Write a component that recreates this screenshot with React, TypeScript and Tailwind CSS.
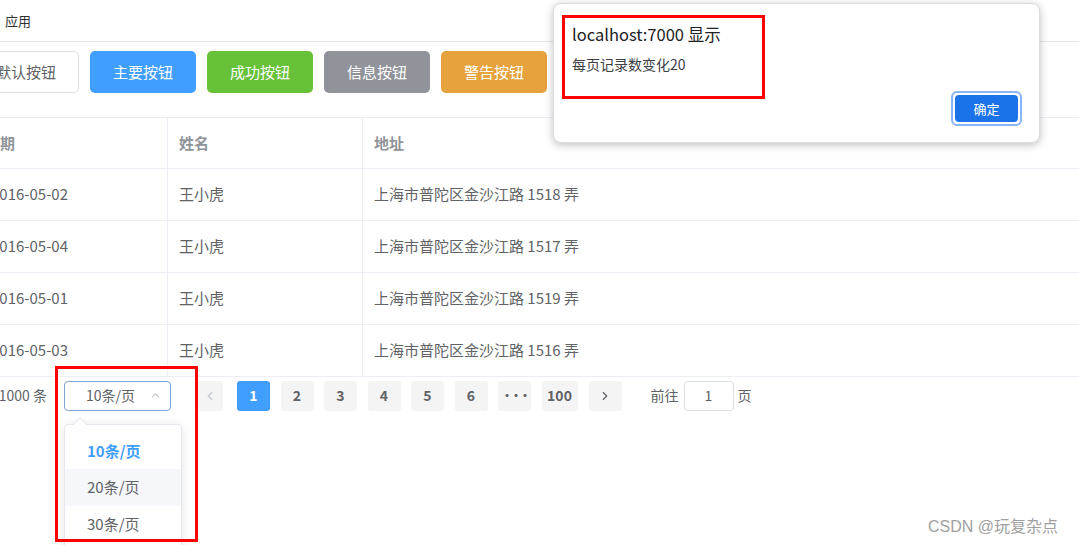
import { ChevronLeft, ChevronRight, ChevronUp } from "lucide-react";

const BUTTONS = [
  { label: "默认按钮", cls: "bg-white text-[#606266] border border-[#dcdfe6]" },
  { label: "主要按钮", cls: "bg-[#409eff] text-white" },
  { label: "成功按钮", cls: "bg-[#67c23a] text-white" },
  { label: "信息按钮", cls: "bg-[#909399] text-white" },
  { label: "警告按钮", cls: "bg-[#e6a23c] text-white" },
];

const ROWS = [
  { date: "2016-05-02", name: "王小虎", address: "上海市普陀区金沙江路 1518 弄" },
  { date: "2016-05-04", name: "王小虎", address: "上海市普陀区金沙江路 1517 弄" },
  { date: "2016-05-01", name: "王小虎", address: "上海市普陀区金沙江路 1519 弄" },
  { date: "2016-05-03", name: "王小虎", address: "上海市普陀区金沙江路 1516 弄" },
];

const PAGES = ["1", "2", "3", "4", "5", "6", "···", "100"];

export default function App() {
  return (
    <div className="relative w-[1079px] h-[545px] overflow-hidden bg-white font-['Noto_Sans_CJK_SC',sans-serif] text-[#606266]">
      {/* top menu */}
      <div className="h-[42px] flex items-center pl-[5px] border-b border-[#e6e6e6] text-[13px] text-[#303133]">
        应用
      </div>

      {/* buttons */}
      <div className="flex gap-[11px] ml-[-27px] pt-[9px]">
        {BUTTONS.map((b) => (
          <div
            key={b.label}
            className={`w-[106px] h-[42px] shrink-0 rounded-[5px] flex items-center justify-center text-[15px] ${b.cls}`}
          >
            {b.label}
          </div>
        ))}
      </div>

      {/* table */}
      <div className="mt-[24px] ml-[-20px] border-t border-[#ebeef5] text-[15px]">
        <div className="grid grid-cols-[188px_195px_1fr] h-[51px] border-b border-[#ebeef5] font-bold text-[#909399]">
          <div className="flex items-center pl-[5px] border-r border-[#ebeef5]">日期</div>
          <div className="flex items-center pl-[11px] border-r border-[#ebeef5]">姓名</div>
          <div className="flex items-center pl-[11px]">地址</div>
        </div>
        {ROWS.map((r) => (
          <div
            key={r.date}
            className="grid grid-cols-[188px_195px_1fr] h-[52px] border-b border-[#ebeef5]"
          >
            <div className="flex items-center pl-[11px] border-r border-[#ebeef5]">{r.date}</div>
            <div className="flex items-center pl-[11px] border-r border-[#ebeef5]">{r.name}</div>
            <div className="flex items-center pl-[11px]">{r.address}</div>
          </div>
        ))}
      </div>

      {/* pagination */}
      <div className="flex items-center h-[37px] ml-[-24px] text-[14px]">
        <span className="w-[71px] shrink-0 whitespace-nowrap text-right">共 1000 条</span>
        <div className="ml-[17px] w-[107px] h-[30px] shrink-0 rounded-[4px] border border-[#7aa3cf] flex items-center justify-between pl-[21px] pr-[8px] text-[14px]">
          <span>10条/页</span>
          <ChevronUp size={13} className="text-[#c0c4cc]" />
        </div>
        <div className="ml-[26px] w-[26px] h-[30px] rounded-[3px] bg-[#f4f4f5] flex items-center justify-center">
          <ChevronLeft size={14} className="text-[#c0c4cc]" />
        </div>
        <div className="flex gap-[10.5px] ml-[14px]">
          {PAGES.map((p, i) => (
            <div
              key={p}
              className={`h-[30px] rounded-[3px] flex items-center justify-center font-bold ${
                i === 0 ? "bg-[#409eff] text-white" : "bg-[#f4f4f5] text-[#606266]"
              } ${p === "100" ? "w-[36px]" : "w-[33px]"} ${p === "···" ? "text-[12px] tracking-[-3px]" : "text-[14px]"}`}
            >
              {p}
            </div>
          ))}
        </div>
        <div className="ml-[11px] w-[33px] h-[30px] rounded-[3px] bg-[#f4f4f5] flex items-center justify-center">
          <ChevronRight size={14} className="text-[#606266]" />
        </div>
        <span className="ml-[29px]">前往</span>
        <div className="ml-[5px] w-[50px] h-[30px] rounded-[4px] border border-[#dcdfe6] flex items-center justify-center">
          1
        </div>
        <span className="ml-[4px]">页</span>
      </div>

      {/* page size dropdown */}
      <div className="absolute left-[64px] top-[424px] w-[118px] h-[140px] bg-white border border-[#e4e7ed] rounded-[4px] shadow-[0_2px_12px_rgba(0,0,0,0.1)] pt-[8px] text-[15px]">
        <div className="absolute left-[10px] top-[-6px] w-[10px] h-[10px] rotate-45 bg-white border-l border-t border-[#e4e7ed]" />
        <div className="h-[36px] flex items-center pl-[22px] font-bold text-[#409eff]">10条/页</div>
        <div className="h-[37px] flex items-center pl-[22px] bg-[#f5f7fa]">20条/页</div>
        <div className="h-[37px] flex items-center pl-[22px]">30条/页</div>
      </div>

      {/* browser alert */}
      <div className="absolute left-[553px] top-[3px] w-[487px] h-[140px] bg-white rounded-[8px] border border-[#dadce0] shadow-[0_2px_8px_rgba(0,0,0,0.25)] flex flex-col">
        <div className="pl-[18px] pt-[20px] text-[16.5px] leading-[20px] text-[#202124]">localhost:7000 显示</div>
        <div className="pl-[18px] pt-[10px] text-[14px] leading-[20px] text-[#3c4043]">每页记录数变化20</div>
        <div className="flex justify-end pr-[17px] mt-auto mb-[16px]">
          <div className="w-[71px] h-[35px] rounded-[6px] border-2 border-[#8ab4f8] p-[2px]">
            <div className="w-full h-full rounded-[4px] bg-[#1a73e8] text-white text-[13px] flex items-center justify-center">
              确定
            </div>
          </div>
        </div>
      </div>

      {/* annotation boxes */}
      <div className="absolute left-[562px] top-[15px] w-[203px] h-[84px] border-[3px] border-[#ff0000]" />
      <div className="absolute left-[55px] top-[366px] w-[143px] h-[176px] border-[3px] border-[#ff0000]" />

      {/* watermark */}
      <div className="absolute left-[928px] top-[515px] text-[16px] text-[#a0a0a0] font-['Liberation_Sans','Noto_Sans_CJK_SC',sans-serif]">
        CSDN @玩复杂点
      </div>
    </div>
  );
}
